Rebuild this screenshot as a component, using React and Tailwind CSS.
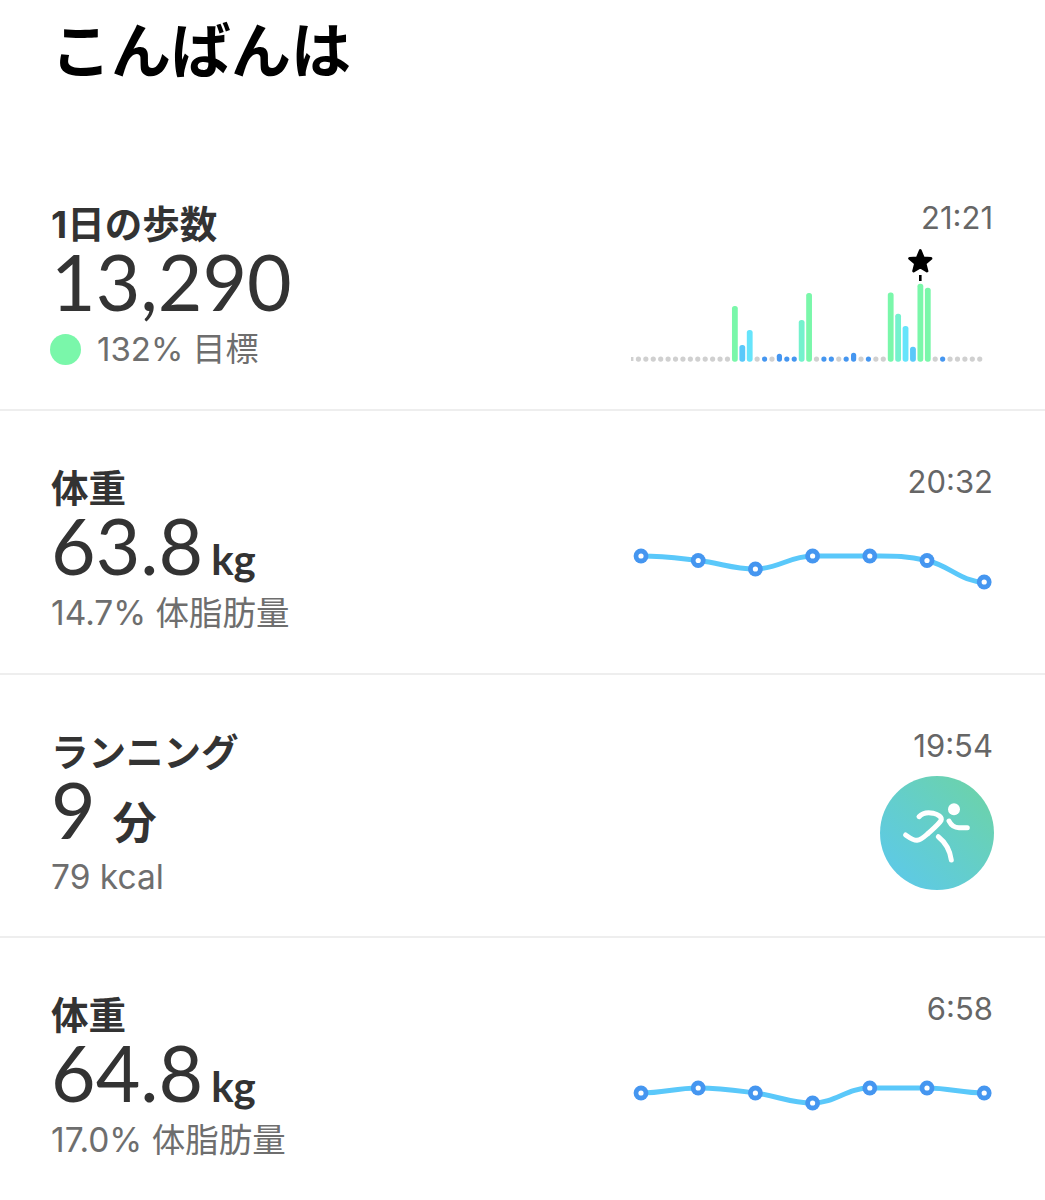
const STEP_BARS = [
  ["g", 3], ["g", 5], ["g", 5], ["g", 5], ["g", 5], ["g", 5], ["g", 5], ["g", 5], ["g", 5], ["g", 5], ["g", 5], ["g", 5], ["g", 5], ["g", 5],
  ["#7af7aa", 55.7], ["#5ac8fa", 16.7], ["#66e4fb", 31.7], ["g", 5], ["b", 5], ["g", 5], ["b", 8], ["b", 5], ["b", 5],
  ["#74f2cd", 41.7], ["#7af7aa", 68.7], ["g", 5], ["b", 5], ["b", 5], ["g", 5], ["b", 5], ["b", 9], ["g", 5], ["b", 5], ["g", 5], ["g", 5],
  ["#7af7aa", 69.3], ["#74f2cd", 48], ["#66e4fb", 35.7], ["#5ac8fa", 15], ["#7af7aa", 78], ["#7af7aa", 74],
  ["g", 5], ["b", 5], ["g", 5], ["g", 5], ["g", 5], ["g", 5], ["g", 5],
];

const BAR_COLORS = { g: "#d0d0d0", b: "#4596f0" };

const StepsChart = () => (
  <svg width="370" height="120" className="block">
    {STEP_BARS.map(([color, h], i) => {
      const small = color === "g" || color === "b";
      const w = small ? 5.2 : 5.8;
      const cx = 3 + i * 7.42;
      // the first dot is cut in half at the chart's left edge
      if (i === 0) return <rect key={i} x="3" y="112" width="2.4" height="4" fill={BAR_COLORS.g} />;
      return (
        <rect
          key={i}
          x={cx - w / 2}
          y={116.7 - (small && h === 5 ? 5.2 : h)}
          width={w}
          height={small && h === 5 ? 5.2 : h}
          rx="2.6"
          fill={BAR_COLORS[color] || color}
        />
      );
    })}
    <path
      d="M292.3 5.5 L295.3 12.8 L303 13.5 L297.1 18.5 L299 26 L292.3 22 L285.6 26 L287.5 18.5 L281.6 13.5 L289.3 12.8 Z"
      fill="#000"
      stroke="#000"
      strokeWidth="2.8"
      strokeLinejoin="round"
    />
    <rect x="291" y="30" width="2.6" height="6" fill="#000" />
  </svg>
);

// smooth line through the points, tangents kept flat where the slope flips
const smoothPath = (pts) => {
  let d = `M${pts[0][0]} ${pts[0][1]}`;
  for (let i = 0; i < pts.length - 1; i++) {
    const [x0, y0] = pts[i];
    const [x1, y1] = pts[i + 1];
    const dx = (x1 - x0) * 0.4;
    const slope = (a, b, c) => {
      if (!a || !c) return 0;
      const s1 = (b[1] - a[1]) / (b[0] - a[0]);
      const s2 = (c[1] - b[1]) / (c[0] - b[0]);
      return s1 * s2 <= 0 ? 0 : (s1 + s2) / 2;
    };
    const m0 = slope(pts[i - 1], pts[i], pts[i + 1]);
    const m1 = slope(pts[i], pts[i + 1], pts[i + 2]);
    d += ` C${x0 + dx} ${y0 + m0 * dx} ${x1 - dx} ${y1 - m1 * dx} ${x1} ${y1}`;
  }
  return d;
};

const WeightChart = ({ ys }) => {
  const pts = ys.map((y, i) => [13 + i * 57.2, y]);
  return (
    <svg width="370" height="65" className="block">
      <path d={smoothPath(pts)} fill="none" stroke="#5ac8fa" strokeWidth="5" />
      {pts.map(([x, y], i) => (
        <g key={i}>
          <circle cx={x} cy={y} r="7.4" fill="#4596f0" />
          <circle cx={x} cy={y} r="2.6" fill="#fff" />
        </g>
      ))}
    </svg>
  );
};

const RunIcon = () => (
  <div className="w-[114px] h-[114px] rounded-full bg-linear-to-tr from-[#5cc8ee] to-[#6ed3a2]">
    <svg width="114" height="114" fill="none" stroke="#fff" strokeWidth="5" strokeLinecap="round" strokeLinejoin="round">
      <circle cx="74" cy="33.3" r="6" fill="#fff" stroke="none" />
      <path d="M25.7 59 C30 62 33 64.5 37 64.3 C41 64 44 61 48 57.5 C53 53 59 48 61 44.5 C62.5 41 58 38.5 53 37.2 C47 36 42 37.5 39 40.7" />
      <path d="M69 45 C71 49 74 51.7 79 51.7 L87.3 51.7" />
      <path d="M58.3 60.7 C65 66 70 74 71.3 84" />
    </svg>
  </div>
);

const Row = ({ title, time, value, unit, sub, right, rightClass, first, last }) => (
  <div className={`flex justify-between ${first ? "h-[264px]" : "h-[263.5px]"} ${last ? "" : "border-b-2 border-[#eeeeee]"}`}>
    <div className="pl-[51px] pt-[60px]">
      <div className="text-[37.5px] leading-[36px] font-bold text-[#333333]">{title}</div>
      <div className="flex items-baseline h-[80px] -mt-[2px] font-['Lato','Noto_Sans_CJK_JP',sans-serif] text-[#333333]">
        <span className="text-[77px] leading-[80px]">{value}</span>
        {unit}
      </div>
      <div className="flex items-center mt-[8px] text-[33.5px] leading-[40px] text-[#6e6e6e]">{sub}</div>
    </div>
    <div className="flex flex-col items-end pr-[47px] pt-[51px]">
      <div className="mr-[5px] text-[31px] leading-[40px] text-[#666666]">{time}</div>
      <div className={rightClass}>{right}</div>
    </div>
  </div>
);

const KgUnit = () => <span className="ml-[8px] text-[42px] font-bold font-['Lato',sans-serif]">kg</span>;

const App = () => {
  return (
    <div lang="ja" className="h-[1200px] overflow-hidden bg-white font-['Inter','Noto_Sans_CJK_JP',sans-serif]">
      <div className="h-[147px] pl-[51px] pt-[16px]">
        <h1 className="text-[60px] leading-[70px] font-bold text-black">こんばんは</h1>
      </div>
      <Row
        first
        title="1日の歩数"
        time="21:21"
        value="13,290"
        sub={
          <>
            <span className="w-[31px] h-[31px] rounded-full bg-[#7af7aa] -ml-[1px] mr-[16px]" />
            <span className="text-[33px]">132% 目標</span>
          </>
        }
        right={<StepsChart />}
        rightClass="mt-[7px]"
      />
      <Row
        title="体重"
        time="20:32"
        value="63.8"
        unit={<KgUnit />}
        sub="14.7% 体脂肪量"
        right={<WeightChart ys={[20, 24.5, 33, 20, 20, 24.5, 46]} />}
        rightClass="mt-[34px]"
      />
      <Row
        title="ランニング"
        time="19:54"
        value="9"
        unit={<span className="ml-[17px] text-[44px] font-bold">分</span>}
        sub="79 kcal"
        right={<RunIcon />}
        rightClass="mt-[10px] mr-[4px]"
      />
      <Row
        last
        title="体重"
        time="6:58"
        value="64.8"
        unit={<KgUnit />}
        sub="17.0% 体脂肪量"
        right={<WeightChart ys={[30, 25, 30, 40, 25, 25, 30]} />}
        rightClass="mt-[34px]"
      />
    </div>
  );
};

export default App;
